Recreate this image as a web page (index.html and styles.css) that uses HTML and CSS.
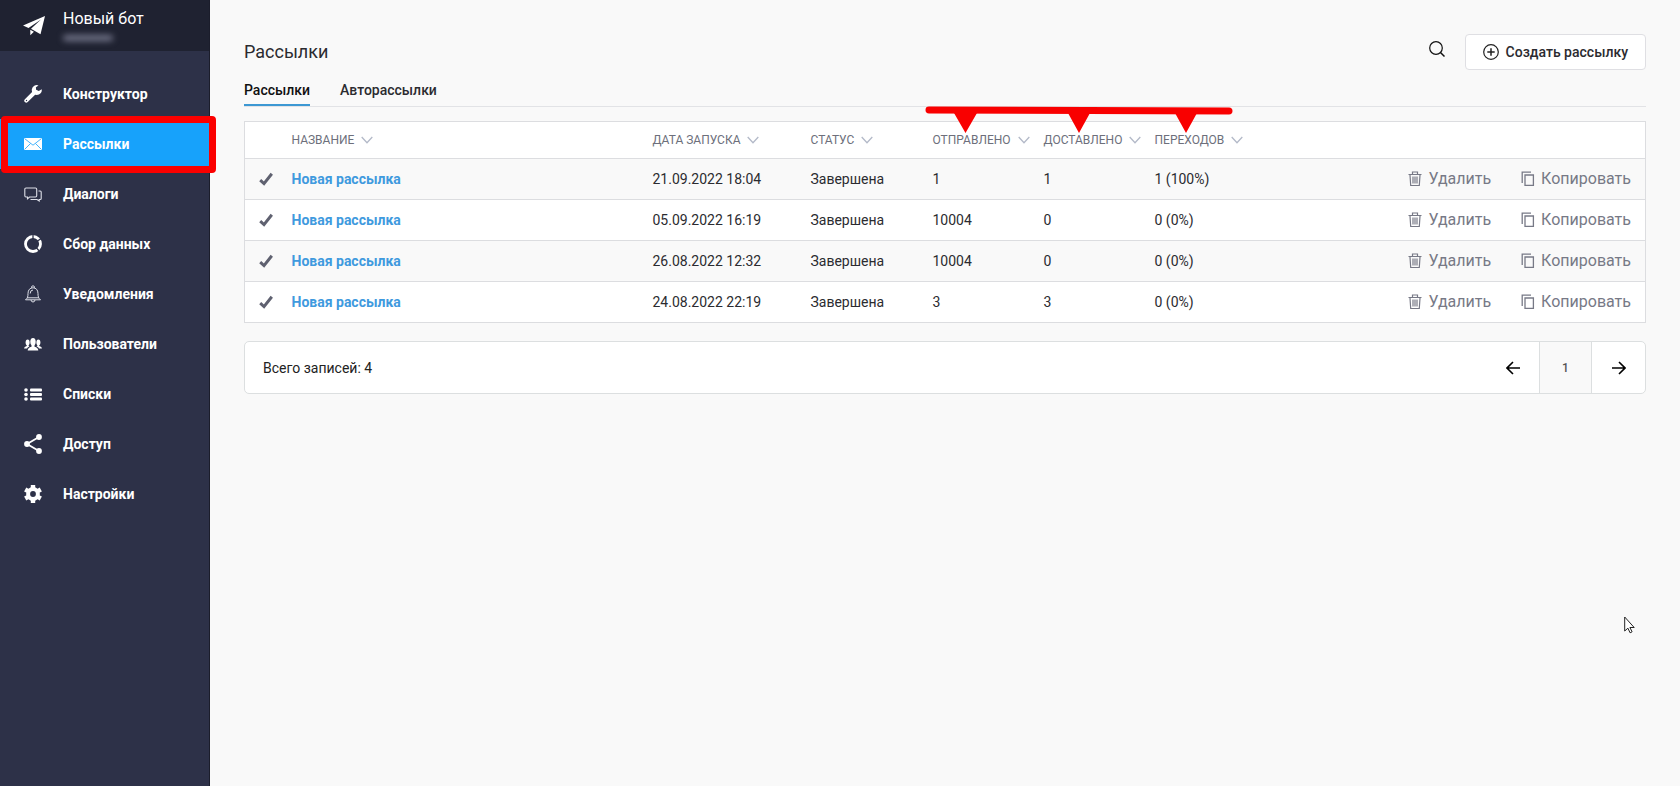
FILE: index.html
```html
<!DOCTYPE html>
<html lang="ru">
<head>
<meta charset="utf-8">
<title>Рассылки</title>
<link rel="stylesheet" href="styles.css">
</head>
<body>
<svg class="sprite" aria-hidden="true">
  <symbol id="check" viewBox="0 0 14 14"><path d="M1.200 8.200 5 11.600 12.800 1.800" fill="none" stroke="currentColor" stroke-width="3"/></symbol>
  <symbol id="chevron" viewBox="0 0 12 8"><path d="M.7 1 6 6.700 11.300 1" fill="none" stroke="currentColor" stroke-width="1.300"/></symbol>
  <symbol id="trash" viewBox="0 0 14 16"><path d="M.5 3.500h13M4.500 3V1h5v2M2 4l.7 10.500h8.600L12 4M5 5.500v7M7 5.500v7M9 5.500v7" fill="none" stroke="currentColor" stroke-width="1.200"/></symbol>
  <symbol id="copy" viewBox="0 0 14 16"><path d="M4 4h8.400v10.400H4zM1.200 12V1.200H10" fill="none" stroke="currentColor" stroke-width="1.300"/></symbol>
</svg>
<div class="app">
  <aside class="sidebar">
    <div class="bot">
      <span class="bot-icon"><svg width="22" height="20" viewBox="0 0 22 20"><path d="M22 0 0 9.400l5.500 2.600L18 3.500 8 12.800l9.500 5.400zM7.300 13.700V19.200l3.600-3.400z" fill="#fff"/></svg></span>
      <div class="bot-text">
        <div class="bot-name">Новый бот</div>
        <div class="bot-handle"></div>
      </div>
    </div>
    <nav class="nav">
      <a href="#" class="nav-item"><span class="nav-icon"><svg width="18" height="18" viewBox="0 0 18 18"><path d="M2.300 15.700 11 7" stroke="#fff" stroke-width="4" stroke-linecap="round"/><path d="M14.500.4A5 5 0 1 0 17.700 4.200L14.800 6l-2.700-1.200-.2-2.500z" fill="#fff"/><circle cx="2.500" cy="15.500" r=".7" fill="#2d3148"/></svg></span>Конструктор</a>
      <a href="#" class="nav-item active"><span class="nav-icon"><svg width="18" height="12" viewBox="0 0 18 12"><path d="M0 0h18v12H0z" fill="#fff"/><path d="M.5.500 9 7.200 17.500.500M.5 11.500 6.500 5.500M17.500 11.500l-6-6" fill="none" stroke="#17a2fb" stroke-width=".8"/></svg></span>Рассылки<span class="frame"></span></a>
      <a href="#" class="nav-item"><span class="nav-icon"><svg width="18" height="15" viewBox="0 0 18 15"><path d="M2 1h9.500a1.200 1.200 0 0 1 1.200 1.200v6.600a1.200 1.200 0 0 1-1.200 1.200H5.500L3.500 11.800V10H2A1.200 1.200 0 0 1 .8 8.800V2.200A1.200 1.200 0 0 1 2 1zM14.500 4h1.700a1 1 0 0 1 1 1v6.500a1 1 0 0 1-1 1h-1v1.500L13 12.500H6.500" fill="none" stroke="#dddfe8" stroke-width="1.100"/></svg></span>Диалоги</a>
      <a href="#" class="nav-item"><span class="nav-icon"><svg width="18" height="18" viewBox="0 0 18 18"><circle cx="9" cy="9" r="7.500" fill="none" stroke="#fff" stroke-width="2.800"/><path d="M9 9V-1M9 9l9-6M9 9l8 9" stroke="#2d3148" stroke-width="1.300"/></svg></span>Сбор данных</a>
      <a href="#" class="nav-item"><span class="nav-icon"><svg width="18" height="18" viewBox="0 0 18 18"><path d="M1.500 14.800C3.500 13 4 12 4 8.500 4 5 6 2.800 9 2.800S14 5 14 8.500c0 3.500.5 4.500 2.500 6.300zM7.600 2.800V1.500Q9 0 10.400 1.500v1.300M7 15q.3 2 2 2t2-2M6.200 8.500Q6.200 5 9 5M3 12.800h12" fill="none" stroke="#dddfe8" stroke-width="1"/></svg></span>Уведомления</a>
      <a href="#" class="nav-item"><span class="nav-icon"><svg width="18" height="13" viewBox="0 0 18 13"><g fill="#fff"><ellipse cx="3.600" cy="4.500" rx="2" ry="3"/><ellipse cx="14.400" cy="4.500" rx="2" ry="3"/><path d="M0 10.500q0-1.700 2.800-2.500V6h1.800v2l.9.500q-2 .7-2.500 2zM18 10.500q0-1.700-2.800-2.500V6h-1.800v2l-.9.500q2 .7 2.500 2z"/><ellipse cx="9" cy="3.800" rx="2.700" ry="3.800"/><path d="M7.500 6h3v2.700q3.800 1 3.800 3.800H3.700q0-2.800 3.800-3.800z"/></g></svg></span>Пользователи</a>
      <a href="#" class="nav-item"><span class="nav-icon"><svg width="18" height="13" viewBox="0 0 18 13"><g fill="#fff"><circle cx="2" cy="2" r="1.800"/><circle cx="2" cy="6.500" r="1.800"/><circle cx="2" cy="11" r="1.800"/><rect x="6" y=".5" width="12" height="3" rx="1"/><rect x="6" y="5" width="12" height="3" rx="1"/><rect x="6" y="9.500" width="12" height="3" rx="1"/></g></svg></span>Списки</a>
      <a href="#" class="nav-item"><span class="nav-icon"><svg width="18" height="20" viewBox="0 0 18 20"><path d="M15 3 3 10l12 7" fill="none" stroke="#fff" stroke-width="1.800"/><g fill="#fff"><circle cx="15" cy="3" r="2.900"/><circle cx="3" cy="10" r="2.900"/><circle cx="15" cy="17" r="2.900"/></g></svg></span>Доступ</a>
      <a href="#" class="nav-item"><span class="nav-icon"><svg width="18" height="18" viewBox="0 0 18 18"><circle cx="9" cy="9" r="4.900" fill="none" stroke="#fff" stroke-width="4"/><path d="M9 0v3.500M9 14.500V18M1.200 4.500l3 1.700M13.800 11.800l3 1.700M1.200 13.500l3-1.700M13.800 6.200l3-1.700" stroke="#fff" stroke-width="4.400"/></svg></span>Настройки</a>
    </nav>
  </aside>
  <main class="main">
    <header class="head">
      <h1 class="title">Рассылки</h1>
      <div class="tools">
        <button class="search" type="button" aria-label="Поиск"><svg width="16" height="16" viewBox="0 0 16 16"><circle cx="7" cy="7" r="6.300" fill="none" stroke="#111" stroke-width="1.200"/><path d="m11.500 11.500 4 4" stroke="#111" stroke-width="1.500"/></svg></button>
        <button class="create" type="button"><svg width="16" height="16" viewBox="0 0 16 16"><circle cx="8" cy="8" r="7.300" fill="none" stroke="#222" stroke-width="1.200"/><path d="M8 4.300v7.400M4.300 8h7.400" stroke="#222" stroke-width="1.500"/></svg>Создать рассылку</button>
      </div>
    </header>
    <div class="tabs">
      <a href="#" class="tab current">Рассылки</a>
      <a href="#" class="tab">Авторассылки</a>
    </div>
    <table class="list">
      <colgroup><col class="c-check"><col><col class="c-date"><col class="c-status"><col class="c-num"><col class="c-num"><col class="c-clicks"><col></colgroup>
      <thead>
        <tr>
          <th></th>
          <th>НАЗВАНИЕ<svg class="chev"><use href="#chevron"/></svg></th>
          <th>ДАТА ЗАПУСКА<svg class="chev"><use href="#chevron"/></svg></th>
          <th>СТАТУС<svg class="chev"><use href="#chevron"/></svg></th>
          <th class="marked">ОТПРАВЛЕНО<svg class="chev"><use href="#chevron"/></svg><svg class="markers" width="308" height="28" viewBox="0 0 308 28"><path d="M4 4 304 5" stroke="#f90000" stroke-width="7" stroke-linecap="round"/><path d="M29 7h23L40.500 27zM143 7h22L154 27zM250 7h22L261 27z" fill="#f90000"/></svg></th>
          <th>ДОСТАВЛЕНО<svg class="chev"><use href="#chevron"/></svg></th>
          <th>ПЕРЕХОДОВ<svg class="chev"><use href="#chevron"/></svg></th>
          <th></th>
        </tr>
      </thead>
      <tbody>
        <tr><td><svg class="check"><use href="#check"/></svg></td><td><a href="#" class="name">Новая рассылка</a></td><td>21.09.2022 18:04</td><td>Завершена</td><td>1</td><td>1</td><td>1 (100%)</td><td><div class="actions"><button type="button"><svg><use href="#trash"/></svg>Удалить</button><button type="button"><svg><use href="#copy"/></svg>Копировать</button></div></td></tr>
        <tr><td><svg class="check"><use href="#check"/></svg></td><td><a href="#" class="name">Новая рассылка</a></td><td>05.09.2022 16:19</td><td>Завершена</td><td>10004</td><td>0</td><td>0 (0%)</td><td><div class="actions"><button type="button"><svg><use href="#trash"/></svg>Удалить</button><button type="button"><svg><use href="#copy"/></svg>Копировать</button></div></td></tr>
        <tr><td><svg class="check"><use href="#check"/></svg></td><td><a href="#" class="name">Новая рассылка</a></td><td>26.08.2022 12:32</td><td>Завершена</td><td>10004</td><td>0</td><td>0 (0%)</td><td><div class="actions"><button type="button"><svg><use href="#trash"/></svg>Удалить</button><button type="button"><svg><use href="#copy"/></svg>Копировать</button></div></td></tr>
        <tr><td><svg class="check"><use href="#check"/></svg></td><td><a href="#" class="name">Новая рассылка</a></td><td>24.08.2022 22:19</td><td>Завершена</td><td>3</td><td>3</td><td>0 (0%)</td><td><div class="actions"><button type="button"><svg><use href="#trash"/></svg>Удалить</button><button type="button"><svg><use href="#copy"/></svg>Копировать</button></div></td></tr>
      </tbody>
    </table>
    <footer class="pager">
      <span class="total">Всего записей: 4</span>
      <button class="page" type="button" aria-label="Назад"><svg width="14" height="14" viewBox="0 0 14 14"><path d="M14 7H1M7 1 1 7l6 6" fill="none" stroke="#000" stroke-width="1.600"/></svg></button>
      <button class="page on" type="button">1</button>
      <button class="page" type="button" aria-label="Вперёд"><svg width="14" height="14" viewBox="0 0 14 14"><path d="M0 7h13M7 1l6 6-6 6" fill="none" stroke="#000" stroke-width="1.600"/></svg></button>
    </footer>
  </main>
  <svg class="pointer" width="11" height="18" viewBox="0 0 11 18"><path d="M.7 1v14l3.200-2.800 2.200 4.600 2-1-2.200-4.300h4.300z" fill="#fff" stroke="#222" stroke-width="1"/></svg>
</div>
</body>
</html>
```
FILE: styles.css
```css
* { box-sizing: border-box; }
body {
  margin: 0;
  background: #f9f9f9;
  color: #2b2b30;
  font: 14px/20px Roboto, "Noto Sans", sans-serif;
}
a { color: inherit; text-decoration: none; }
button {
  padding: 0;
  border: 0;
  background: none;
  color: inherit;
  font: inherit;
  cursor: pointer;
}
svg { display: block; flex: none; }
.sprite { position: absolute; width: 0; height: 0; }
.app { display: flex; min-height: 100vh; }

.sidebar {
  flex: none;
  width: 210px;
  border-right: 1px solid #1b1d2b;
  background: #2d3148;
  color: #fff;
}
.bot { display: flex; height: 51px; padding-left: 23px; background: #1f2231; }
.bot-icon { width: 40px; padding-top: 16px; }
.bot-name { padding-top: 9px; font-size: 16px; }
.bot-handle {
  width: 50px;
  height: 6px;
  margin-top: 6px;
  border-radius: 3px;
  background: #73758a;
  filter: blur(3px);
}
.nav { padding-top: 18px; }
.nav-item {
  position: relative;
  display: flex;
  align-items: center;
  height: 50px;
  padding-left: 24px;
  font-weight: 700;
}
.nav-icon { width: 39px; }
.active { background: #17a2fb; }
.frame {
  position: absolute;
  inset: -3px -7px -4px 1px;
  z-index: 2;
  border: 7px solid #fb0000;
  border-radius: 4px;
}

.main { flex: 1; min-width: 0; padding: 34px 34px 0; }
.head { display: flex; justify-content: space-between; }
.title { margin: 6px 0 0; font-size: 18px; line-height: 24px; font-weight: 400; }
.tools { display: flex; gap: 20px; }
.search { display: flex; width: 16px; height: 30px; align-items: center; }
.create {
  display: flex;
  align-items: center;
  gap: 7px;
  height: 36px;
  padding: 0 17px;
  border: 1px solid #dfdfe3;
  border-radius: 4px;
  background: #fff;
  font-weight: 500;
}
.tabs {
  display: flex;
  gap: 30px;
  height: 37px;
  border-bottom: 1px solid #e2e3e6;
}
.tab { padding-top: 10px; font-weight: 500; }
.current { color: #111; border-bottom: 2px solid #3d98d3; }

.list {
  width: 100%;
  margin-top: 14px;
  border: 1px solid #dcdde0;
  border-collapse: collapse;
  table-layout: fixed;
  background: #fff;
}
.c-check { width: 47px; }
.c-date { width: 158px; }
.c-status { width: 122px; }
.c-num { width: 111px; }
.c-clicks { width: 130px; }
.list th {
  height: 37px;
  padding: 0;
  color: #6d6f7b;
  font-size: 12px;
  font-weight: 400;
  text-align: left;
  white-space: nowrap;
}
.list td { height: 41px; padding: 0; border-top: 1px solid #dcdde0; }
.list tbody tr:nth-child(odd) { background: #f9f9f9; }
.chev {
  display: inline-block;
  width: 12px;
  height: 8px;
  margin-left: 7px;
  color: #b3b9c8;
}
.marked { position: relative; }
.markers { position: absolute; left: -8px; top: -16px; }
.check { width: 14px; height: 14px; margin-left: 14px; color: #5f6170; }
.name { color: #3f9ade; font-weight: 700; }
.actions { display: flex; justify-content: flex-end; gap: 30px; padding-right: 14px; }
.actions button {
  display: flex;
  align-items: center;
  gap: 6px;
  color: #777986;
  font-size: 16px;
}
.actions svg { width: 14px; height: 16px; }

.pager {
  display: flex;
  align-items: stretch;
  height: 53px;
  margin-top: 18px;
  border: 1px solid #dcdfe0;
  border-radius: 5px;
  background: #fff;
}
.total { flex: 1; align-self: center; padding-left: 18px; color: #222; }
.page { display: flex; width: 53px; align-items: center; justify-content: center; }
.on {
  border: solid #dcdfe0;
  border-width: 0 1px;
  background: #f9f9f9;
  color: #555;
  font-size: 12px;
  font-weight: 500;
}
.pointer { position: absolute; left: 1624px; top: 616px; }
```
